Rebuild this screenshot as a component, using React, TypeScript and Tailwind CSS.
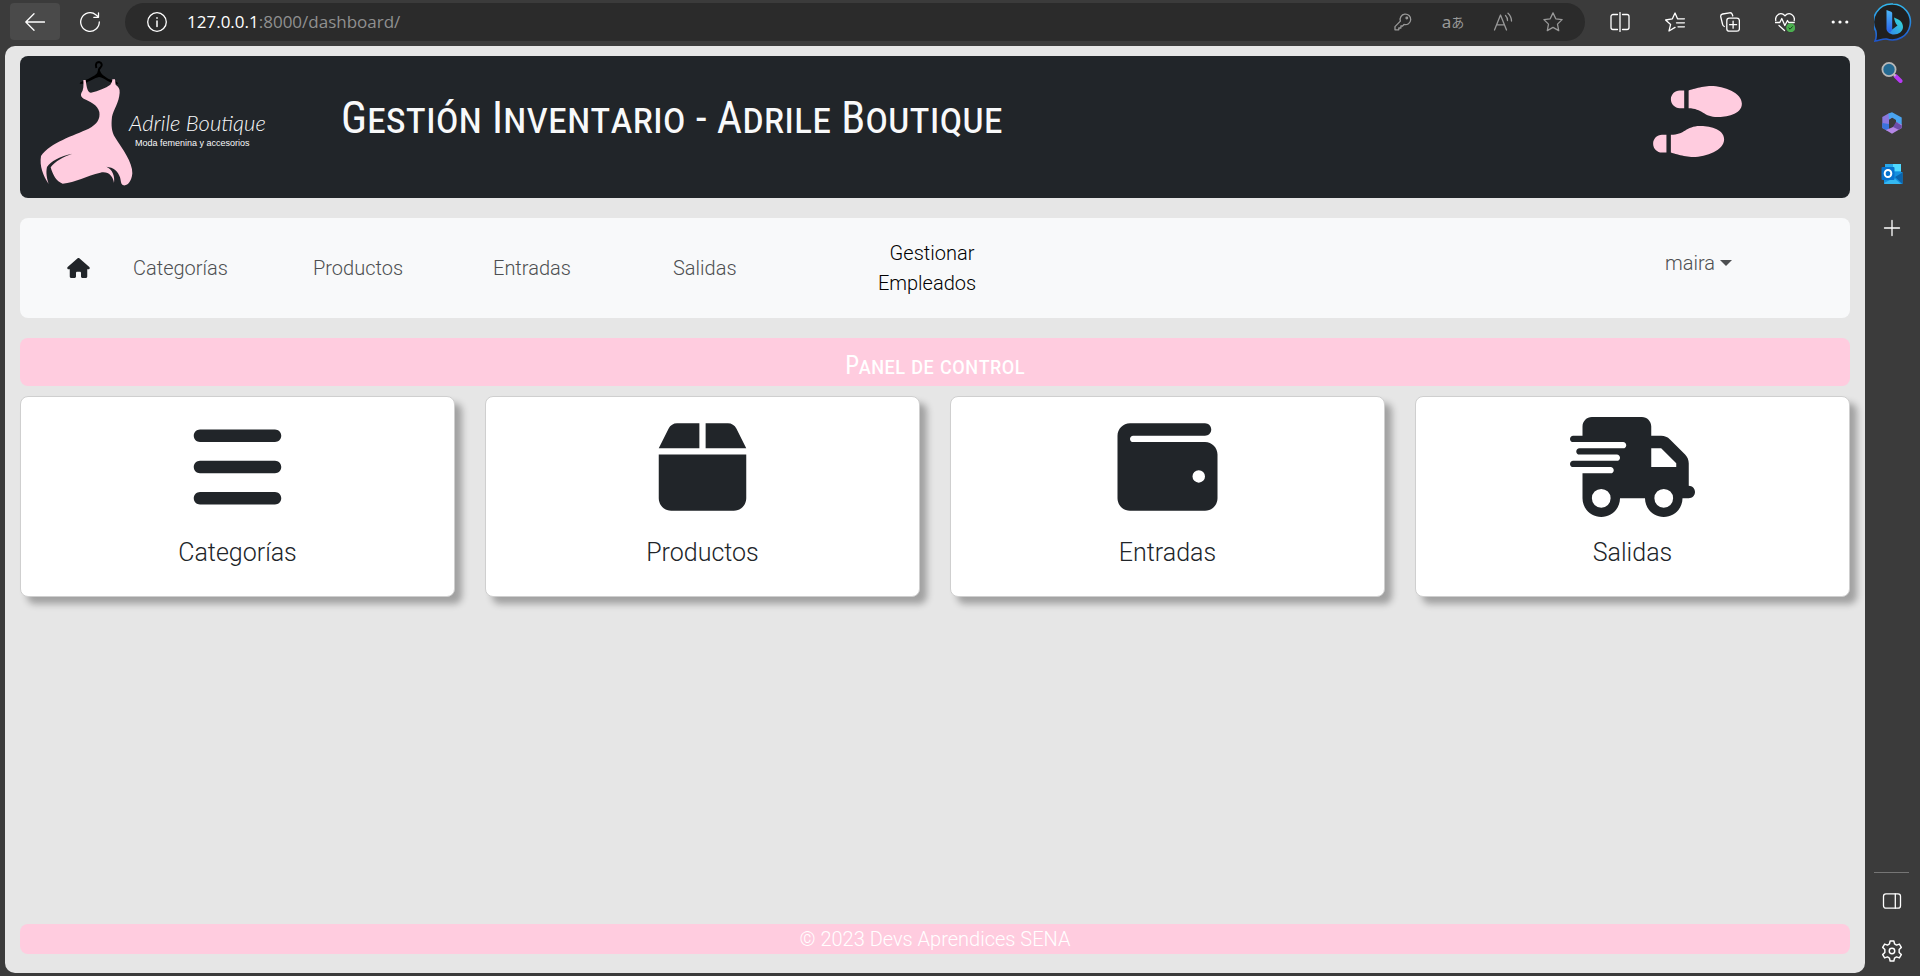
import React from "react";
import {
  FaBars,
  FaBox,
  FaHouse,
  FaShoePrints,
  FaTruckFast,
  FaWallet,
} from "react-icons/fa6";

type IconProps = { children: React.ReactNode; className?: string };

function Line({ children, className = "size-5" }: IconProps) {
  return (
    <svg
      viewBox="0 0 20 20"
      fill="none"
      stroke="currentColor"
      strokeWidth="1.3"
      strokeLinecap="round"
      strokeLinejoin="round"
      className={className}
      aria-hidden="true"
    >
      {children}
    </svg>
  );
}

const starPath =
  "M10 .9l2.8 5.9 6.3.8-4.6 4.5 1.2 6.5L10 15.400l-5.700 3.200 1.200-6.500L.9 7.600l6.300-.8z";

function BarButton({ label, children }: { label: string; children: React.ReactNode }) {
  return (
    <button type="button" aria-label={label} className="flex size-5 items-center justify-center">
      {children}
    </button>
  );
}

function Toolbar() {
  return (
    <header className="flex h-[46px] items-start pt-[3px] pl-[10px] pr-2 text-white">
      <button
        type="button"
        aria-label="Atrás"
        className="flex h-[37px] w-[50px] items-center justify-center rounded-sm bg-[#4a4a4a]"
      >
        <Line>
          <path d="M19.500 10H.8M9 1.800L.8 10 9 18.200" />
        </Line>
      </button>
      <button
        type="button"
        aria-label="Actualizar"
        className="ml-5 flex h-[37px] w-5 items-center justify-center"
      >
        <Line>
          <path d="M19.300 10A9.300 9.300 0 1 1 15.800 2.700L18.500 5M18.500.8V5.300H13.800" />
        </Line>
      </button>
      <div className="ml-[25px] flex h-[38px] flex-1 items-center rounded-full bg-[#2b2b2b] pr-[22px] pl-[22px]">
        <Line>
          <circle cx="10" cy="10" r="9.300" />
          <path d="M10 9v5.500M10 5.800v.4" strokeWidth="1.500" />
        </Line>
        <a
          href="#url"
          className="ml-5 flex-1 font-['Open_Sans',sans-serif] text-[17px] leading-6 text-[#909090]"
        >
          <span className="text-white">127.0.0.1</span>:8000/dashboard/
        </a>
        <div className="flex items-center gap-[30px] text-[#999]">
          <BarButton label="Contraseñas">
            <Line>
              <path d="M7.400 9.100A5.300 5.300 0 1 1 11 12.500L9.600 14H7.900v2H5.800v1.800H2v-3.200z" />
              <circle cx="13.800" cy="6" r=".8" />
            </Line>
          </BarButton>
          <BarButton label="Traducir">
            <span className="flex items-center font-['Noto_Sans','Noto_Sans_CJK_JP',sans-serif] leading-5 whitespace-nowrap">
              <span className="text-[17px]">a</span>
              <span className="text-[13px]">あ</span>
            </span>
          </BarButton>
          <BarButton label="Leer en voz alta">
            <Line>
              <path d="M1.500 18L7.500 3l6 15M3.800 12.800h7.400M12.500 3.500a7 7 0 0 1 2 5M15 1.200a11 11 0 0 1 3.500 7.800" />
            </Line>
          </BarButton>
          <BarButton label="Agregar a favoritos">
            <Line>
              <path d={starPath} />
            </Line>
          </BarButton>
        </div>
      </div>
      <div className="ml-[25px] flex h-[38px] items-center gap-[35px]">
        <BarButton label="Pantalla dividida">
          <Line>
            <path d="M10 .5v19M7.500 2.500H3a2 2 0 0 0-2 2v11a2 2 0 0 0 2 2h4.500M12.500 2.500H17a2 2 0 0 1 2 2v11a2 2 0 0 1-2 2h-4.500" />
          </Line>
        </BarButton>
        <BarButton label="Favoritos">
          <Line>
            <path d="M12.500 6.800L10 1 7.400 6.800.6 8l5 4.400L4 19 10 15.400M12.800 6.800h6.600M11.500 10.800h7.900M13 14.800h6.400" />
          </Line>
        </BarButton>
        <BarButton label="Colecciones">
          <Line>
            <rect x="6.800" y="6.200" width="12.600" height="13" rx="2.500" />
            <path d="M13.100 9.200v7M9.600 12.700h7M4.300 14.500A3 3 0 0 1 2.500 12L.8 5A2.500 2.500 0 0 1 2.600 2L9.500.8A2.500 2.500 0 0 1 12.300 2.500L12.800 4" />
          </Line>
        </BarButton>
        <BarButton label="Rendimiento">
          <Line>
            <path d="M.8 8.500C-.3 3.500 5.500-1 10 3.700 14.500-1 20.300 3.500 19.200 8.500M.5 10.500h4.300l2-4 3 7 2.700-5 1.200 2h5.500M4 13.500l5.500 5" />
            <circle cx="15.700" cy="15.800" r="4.500" fill="#4caf50" stroke="none" />
            <path d="M13.900 16l1.200 1.200 2.300-2.500" stroke="#143d18" strokeWidth="1" />
          </Line>
        </BarButton>
        <BarButton label="Más">
          <svg viewBox="0 0 20 20" className="size-5" fill="currentColor" aria-hidden="true">
            <circle cx="3.200" cy="10" r="1.600" />
            <circle cx="10" cy="10" r="1.600" />
            <circle cx="16.800" cy="10" r="1.600" />
          </svg>
        </BarButton>
      </div>
      <button type="button" aria-label="Bing" className="ml-6 shrink-0">
        <svg viewBox="0 0 38 40" className="h-10 w-[38px]" aria-hidden="true">
          <defs>
            <linearGradient id="bing-ring" x1="0" y1="0" x2="0" y2="1">
              <stop offset="0" stopColor="#31b8ee" />
              <stop offset="1" stopColor="#1d55cc" />
            </linearGradient>
            <linearGradient id="bing-b" x1="0" y1="0" x2="0" y2="1">
              <stop offset="0" stopColor="#4db8f8" />
              <stop offset="1" stopColor="#2962e8" />
            </linearGradient>
            <linearGradient id="bing-tail" x1="1" y1="0" x2="0" y2="1">
              <stop offset="0" stopColor="#35e0d0" />
              <stop offset="1" stopColor="#2f80f0" />
            </linearGradient>
          </defs>
          <path
            d="M19 1a18 18 0 1 1-6.500 35C9 35.500 5 37.500 1 38c1.500-3 1.500-6.500.8-10A18.200 18.200 0 0 1 19 1z"
            fill="#202020"
            stroke="url(#bing-ring)"
            strokeWidth="1.600"
          />
          <path
            d="M20 14.500c4.500 1.500 9 4.300 9 9.500 0 4.500-4.500 7.500-9 7.500-4 0-7-2.500-7-5.500l4.500 1 6-4.500c-2-1.500-3-5-3.500-8z"
            fill="url(#bing-tail)"
          />
          <path d="M12.500 7l4 1.500c1 .4 1.700 1 1.700 2V27l-2.200 2.500c-2-.5-3.500-1.500-3.500-3.500z" fill="url(#bing-b)" />
        </svg>
      </button>
    </header>
  );
}

function Sidebar() {
  return (
    <aside className="flex w-[55px] shrink-0 flex-col items-center justify-between pt-[15px] pr-[2px] pb-[14px] text-white">
      <div className="flex flex-col items-center gap-[29px]">
        <button type="button" aria-label="Buscar">
          <svg viewBox="0 0 22 22" className="size-[22px]" aria-hidden="true">
            <path d="M14.500 15l5 5" stroke="#b739f5" strokeWidth="4" strokeLinecap="round" />
            <path d="M12.500 13l2 2" stroke="#bbb" strokeWidth="2" />
            <circle cx="8" cy="8.500" r="6.600" fill="#256a92" stroke="#b8b8b8" strokeWidth="1.800" />
          </svg>
        </button>
        <button type="button" aria-label="Microsoft 365">
          <svg viewBox="0 0 22 22" className="size-[22px]" aria-hidden="true">
            <path d="M7.500 1.500L1.300 5v11l5 2.800L8 17V7.500L12.500 5V2z" fill="#8b78de" />
            <path d="M1.300 11v5l5 2.800L8 17v-5z" fill="#3a73dc" />
            <path d="M7.500 1.500L11 .3 20.700 5.500v8L15 9.800V8L11 5.600 8 7.500z" fill="#4aa4ef" />
            <path d="M20.700 12.500V16L11 21.700 4.800 18 11 15.500l4-2.300V10z" fill="#b587e6" />
            <path d="M15 10l5.700 3.500V16l-3 1.800L12 15z" fill="#6d4da8" />
          </svg>
        </button>
        <button type="button" aria-label="Outlook">
          <svg viewBox="0 0 22 22" className="size-[22px]" aria-hidden="true">
            <path d="M4 1h16v10H4z" fill="#28a8ea" />
            <path d="M12 1h8v7h-8z" fill="#50d9ff" />
            <path d="M3 9h18.500v12H3z" fill="#1490df" />
            <path d="M14 14l7.500-4.500V21z" fill="#0a64ad" />
            <path d="M3 20l10-5 7 6H4z" fill="#35b8f1" />
            <rect x=".5" y="4" width="13" height="13" rx="1" fill="#0873ce" />
            <ellipse cx="7" cy="10.500" rx="3.300" ry="3.600" fill="none" stroke="#fff" strokeWidth="2" />
          </svg>
        </button>
        <button type="button" aria-label="Personalizar" className="mt-1">
          <Line>
            <path d="M10 2.500v15M2.500 10h15" />
          </Line>
        </button>
      </div>
      <div className="flex flex-col items-center">
        <hr className="mb-[18px] w-[35px] border-[#757575]" />
        <button type="button" aria-label="Barra lateral" className="mb-[29px]">
          <Line>
            <rect x="1.500" y="2.800" width="17" height="14.400" rx="2.500" />
            <path d="M13.300 2.800v14.400" />
          </Line>
        </button>
        <button type="button" aria-label="Configuración">
          <Line className="size-[22px]">
            <path d="M8.300.9h3.400l.6 2.700 1.800 1 2.600-.9 1.800 3-2 1.900v2.800l2 1.900-1.800 3-2.600-.9-1.800 1-.6 2.700H8.300l-.6-2.700-1.800-1-2.600.9-1.800-3 2-1.900V8.600l-2-1.900 1.800-3 2.600.9 1.800-1z" />
            <circle cx="10" cy="10" r="2.500" />
          </Line>
        </button>
      </div>
    </aside>
  );
}

function Logo() {
  return (
    <a href="#inicio" aria-label="Adrile Boutique" className="flex w-[304px] shrink-0 items-center">
      <svg viewBox="110 172 300 390" className="h-[130px] w-[100px] shrink-0" aria-hidden="true">
        <path
          d="M288 202C284 188 290 184 296 184C305 185 307 196 300 201C294 205 295 209 296 216"
          fill="none"
          stroke="#000"
          strokeWidth="6"
        />
        <path
          d="M292 212L300 212C302 221 312 227 325 235C338 240 350 242 354 249L340 249C322 243 306 229 296 229C284 231 266 244 248 249L238 249C240 242 250 240 265 234C280 226 291 222 292 212z"
          fill="#000"
        />
        <path
          d="M249 238L256 238C259 262 262 276 272 276C295 270 316 262 330 252C334 247 336 242 336 236L344 236L346 252C354 257 359 264 358 276C356 306 340 325 335 348C332 375 334 393 344 410C366 445 397 485 396 518C394 542 382 556 370 554C361 552 363 544 359 530C353 512 340 500 318 498C337 506 344 527 341 547C338 527 325 511 300 516C260 525 225 545 187 549C168 543 157 522 151 500C163 482 190 468 216 459C180 466 150 482 140 499C136 516 140 535 145 550C128 525 117 496 122 466C150 425 220 405 265 384C291 370 300 355 297 334C292 311 268 303 250 294C243 290 240 285 243 277C250 268 250 255 249 238z"
          fill="#ffccdf"
        />
      </svg>
      <span className="-ml-2 flex flex-col pt-3 text-[#f8f9fa]">
        <span className="font-['Lato',sans-serif] text-[22px] leading-7 font-light italic">
          Adrile Boutique
        </span>
        <span className="pl-[6px] font-['Liberation_Sans',sans-serif] text-[9px] leading-3">
          Moda femenina y accesorios
        </span>
      </span>
    </a>
  );
}

const links = ["Categorías", "Productos", "Entradas", "Salidas"];

const cards = [
  { label: "Categorías", Icon: FaBars },
  { label: "Productos", Icon: FaBox },
  { label: "Entradas", Icon: FaWallet },
  { label: "Salidas", Icon: FaTruckFast },
];

const titleFont = "font-['Liberation_Sans_Narrow','Roboto_Condensed',sans-serif] [font-variant-caps:small-caps]";

export default function App() {
  return (
    <div className="flex min-h-screen flex-col bg-[#3b3b3b] font-['Roboto',sans-serif]">
      <Toolbar />
      <div className="flex flex-1">
        <main className="mb-[3px] ml-[5px] flex min-w-0 flex-1 flex-col rounded-[10px] bg-[#e6e6e6] px-[15px] pt-[10px] pb-[19px]">
          <div className="flex items-start rounded-lg bg-[#212529] py-[2px] pl-[17px] pr-[108px]">
            <Logo />
            <h1
              className={
                "mt-[28px] flex-1 text-[44px] leading-[64px] font-normal text-[#f8f9fa] " + titleFont
              }
            >
              Gestión Inventario - Adrile Boutique
            </h1>
            <FaShoePrints className="mt-7 h-[71px] w-[89px] text-[#ffccdf]" />
            <span className="h-[138px]" />
          </div>

          <nav className="mt-5 flex items-start rounded-lg bg-[#f8f9fa] py-5 pl-[47px] pr-[118px] text-[20px] leading-[30px] font-light">
            <a href="#inicio" aria-label="Inicio" className="mt-[20px] w-[66px] text-[#212529]">
              <FaHouse className="h-5 w-[23px]" />
            </a>
            {links.map((l) => (
              <a key={l} href={"#" + l} className="mt-[15px] w-[180px] text-[#4d4f51]">
                {l}
              </a>
            ))}
            <a href="#empleados" className="ml-[8px] w-[132px] text-center text-black">
              <span className="pl-[10px]">Gestionar</span>
              <br />
              Empleados
            </a>
            <button
              type="button"
              className="mt-[10px] ml-auto flex items-center gap-[5px] text-[#4d4f51]"
            >
              maira
              <svg viewBox="0 0 12 6" className="h-[6px] w-3" fill="currentColor" aria-hidden="true">
                <path d="M0 0h12L6 6z" />
              </svg>
            </button>
          </nav>

          <h2
            className={
              "mt-5 rounded-lg bg-[#ffccdf] pt-2 text-center text-[25px] leading-10 font-normal text-white " +
              titleFont
            }
          >
            Panel de control
          </h2>

          <section className="mt-[10px] grid grid-cols-4 gap-[30px]">
            {cards.map(({ label, Icon }) => (
              <a
                key={label}
                href={"#" + label}
                className="flex flex-col items-center rounded-lg border border-[#cfcfcf] bg-white pt-[20px] pb-[23px] text-[#212529] shadow-[7px_7px_7px_rgba(0,0,0,0.3)]"
              >
                <Icon className="h-[100px] w-[125px]" />
                <span className="mt-[16px] text-[25px] leading-10 font-light">{label}</span>
              </a>
            ))}
          </section>

          <footer className="mt-auto rounded-lg bg-[#ffccdf] text-center text-[20px] leading-[30px] font-light text-white">
            © 2023 Devs Aprendices SENA
          </footer>
        </main>
        <Sidebar />
      </div>
    </div>
  );
}
